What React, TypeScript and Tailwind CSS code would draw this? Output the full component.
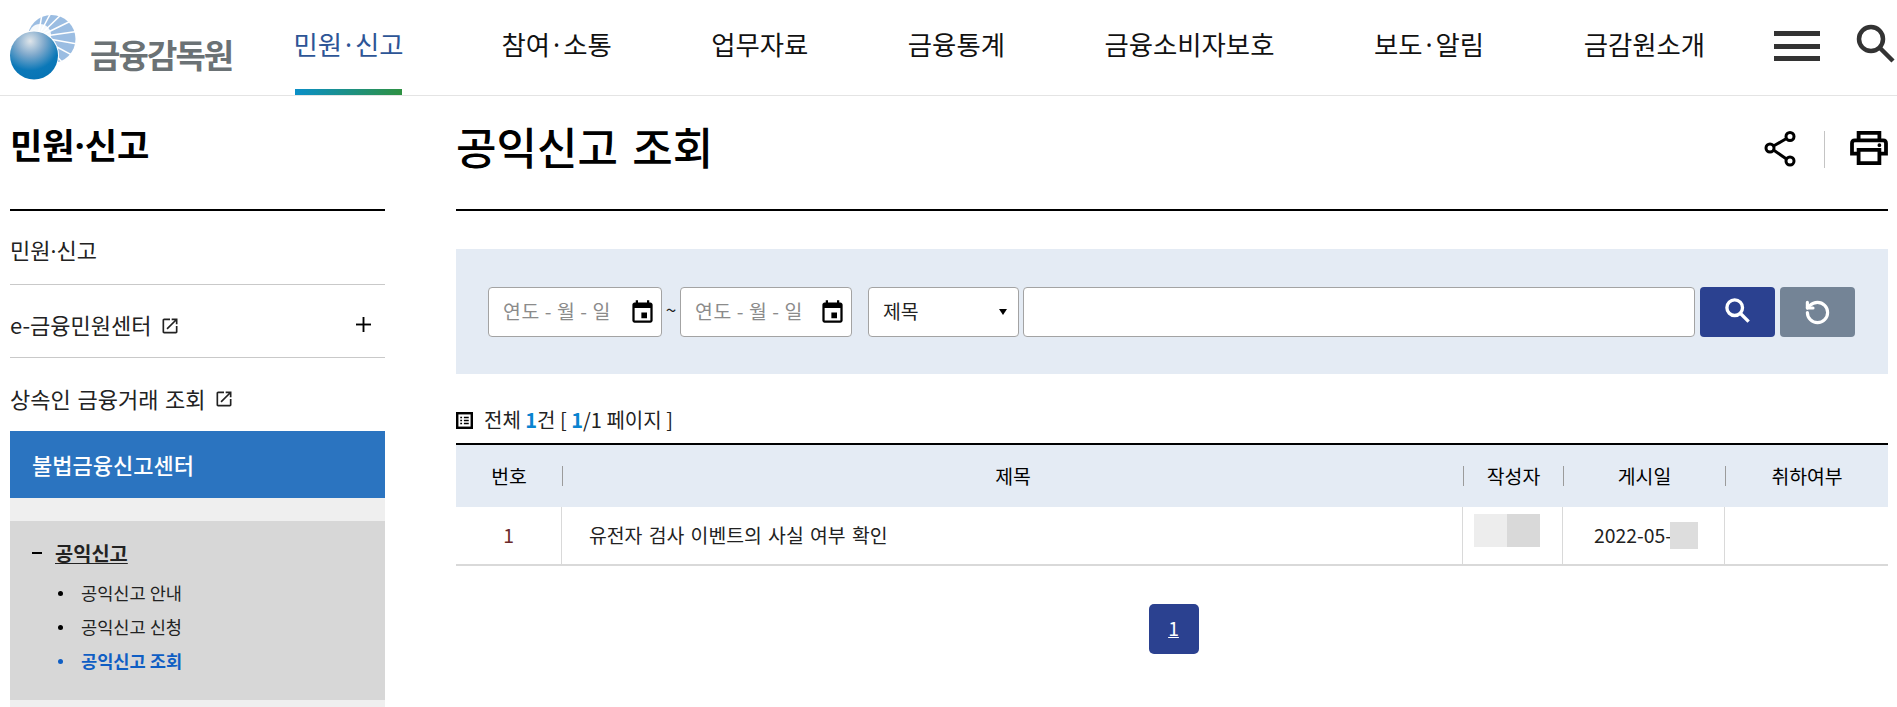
import React from 'react';
import { RotateCcw } from 'lucide-react';

function Dot() {
  return <span className="font-['Noto_Sans']">·</span>;
}

function NavDot() {
  return <span className="mx-[3px] font-['Noto_Sans']">·</span>;
}

const navItems = [
  <>참여<NavDot />소통</>,
  '업무자료',
  '금융통계',
  '금융소비자보호',
  <>보도<NavDot />알림</>,
  '금감원소개',
];

function Logo() {
  const rays = [-80, -62, -44, -26, -8, 10, 28, 46, 64, 82];
  return (
    <svg width="70" height="70" viewBox="0 0 70 70" className="shrink-0">
      <defs>
        <radialGradient id="ball" cx="0.42" cy="0.2" r="0.85">
          <stop offset="0" stopColor="#dfe5ea" />
          <stop offset="0.35" stopColor="#7fa9cc" />
          <stop offset="0.72" stopColor="#0b78b8" />
          <stop offset="1" stopColor="#0673b4" />
        </radialGradient>
      </defs>
      <circle cx="41.5" cy="26" r="24" fill="#9bbde2" />
      <g stroke="#fff" strokeWidth="1.5">
        {rays.map((r) => (
          <line key={r} x1="28" y1="24" x2={28 + 44 * Math.cos((r * Math.PI) / 180)} y2={24 + 44 * Math.sin((r * Math.PI) / 180)} />
        ))}
      </g>
      <circle cx="30" cy="22" r="11" fill="#fff" opacity="0.9" />
      <circle cx="24" cy="42.5" r="25" fill="#fff" />
      <circle cx="24" cy="42.5" r="24" fill="url(#ball)" />
    </svg>
  );
}

function CalendarIcon() {
  return (
    <svg width="27" height="27" viewBox="0 0 24 24" fill="#000" className="shrink-0">
      <path d="M16 12h-5v5h5v-5zM16 1v2H8V1H6v2H5c-1.11 0-1.99.9-1.99 2L3 19c0 1.1.89 2 2 2h14c1.1 0 2-.9 2-2V5c0-1.1-.9-2-2-2h-1V1h-2zm3 18H5V8h14v11z" />
    </svg>
  );
}

function ExternalIcon() {
  return (
    <svg width="20" height="20" viewBox="0 0 24 24" fill="#222" className="mt-[2px] shrink-0">
      <path d="M19 19H5V5h7V3H5c-1.11 0-2 .9-2 2v14c0 1.1.89 2 2 2h14c1.1 0 2-.9 2-2v-7h-2v7zM14 3v2h3.59l-9.83 9.83 1.41 1.41L19 6.41V10h2V3h-7z" />
    </svg>
  );
}

function DateBox({ width }: { width: string }) {
  return (
    <div className={`flex h-[50px] items-center justify-between rounded-[4px] border border-[#a3a3a3] bg-white pr-[5px] pl-[14px] ${width}`}>
      <span className="text-[19.36px] tracking-[0.6px] text-[#8b8b8b]">연도 - 월 - 일</span>
      <CalendarIcon />
    </div>
  );
}

export default function App() {
  return (
    <div className="h-[707px] overflow-hidden bg-white font-['Noto_Sans_CJK_KR','Noto_Sans',sans-serif] text-[#222]">
      {/* Header */}
      <header className="flex h-[96px] border-b border-[#e4e4e4]">
        <div className="ml-[10px] flex w-[285px] shrink-0 items-center gap-[10px]">
          <Logo />
          <span className="mt-[13px] text-[33px] leading-none font-bold tracking-[-1.9px] text-[#6b7275]">금융감독원</span>
        </div>
        <nav className="flex gap-[99.5px] text-[26.4px] text-[#111]">
          <a className="flex h-[95px] w-[107px] justify-center border-b-[6px] border-transparent pt-[24px] leading-[40px] whitespace-nowrap text-[#2d5596] [border-image:linear-gradient(to_right,#0a8fc9,#2f9141)_1]">
            <span>민원<NavDot />신고</span>
          </a>
          {navItems.map((item, i) => (
            <a key={i} className="pt-[24px] leading-[40px] whitespace-nowrap">
              {item}
            </a>
          ))}
        </nav>
        <div className="ml-auto flex items-start">
          <div className="mt-[31px] mr-[32px] flex h-[30px] w-[46px] flex-col justify-between">
            <span className="h-[5px] bg-[#333]" />
            <span className="h-[5px] bg-[#333]" />
            <span className="h-[5px] bg-[#333]" />
          </div>
          <svg width="44" height="44" viewBox="0 0 44 44" fill="none" stroke="#333" strokeWidth="4.5" className="mt-[24px] mr-[1px]">
            <circle cx="19" cy="15" r="12" />
            <line x1="28" y1="24" x2="41" y2="37" />
          </svg>
        </div>
      </header>

      <div className="flex">
        {/* Sidebar */}
        <aside className="ml-[10px] w-[375px] shrink-0">
          <h2 className="flex h-[115px] items-start border-b-2 border-black pt-[24px] text-[35.2px] leading-[48px] font-bold text-black">
            <span>민원<Dot />신고</span>
          </h2>
          <div className="flex h-[74px] items-center border-b border-[#c9c9c9] pt-[5px] text-[22px]">
            <span>민원<Dot />신고</span>
          </div>
          <div className="flex h-[73px] items-center justify-between border-b border-[#c9c9c9] pt-[7px] pr-[14px] text-[22px]">
            <span className="flex items-center gap-[8px]">
              e-금융민원센터 <ExternalIcon />
            </span>
            <svg width="15" height="15" viewBox="0 0 16 16" stroke="#000" strokeWidth="2">
              <line x1="8" y1="0" x2="8" y2="16" />
              <line x1="0" y1="8" x2="16" y2="8" />
            </svg>
          </div>
          <div className="flex h-[73px] items-center gap-[8px] pt-[7px] text-[22px] [word-spacing:0.08em]">
            상속인 금융거래 조회 <ExternalIcon />
          </div>
          <div className="flex h-[67px] items-center bg-[#2b74c0] pl-[22px] text-[22px] font-medium text-white">불법금융신고센터</div>
          <div className="bg-[#efefef] pt-[23px] pb-[20px]">
            <div className="h-[179px] bg-[#d7d7d7] pt-[17px] pl-[22px]">
              <div className="flex items-center gap-[13px] text-[19.8px] leading-[30px] font-bold">
                <span className="h-[2px] w-[10px] bg-black" />
                <span className="underline underline-offset-2">공익신고</span>
              </div>
              <ul className="mt-[8px] text-[17.6px] leading-[34px]">
                <li className="flex items-center gap-[18px] pl-[26px]">
                  <span className="size-[5px] rounded-full bg-black" />
                  공익신고 안내
                </li>
                <li className="flex items-center gap-[18px] pl-[26px]">
                  <span className="size-[5px] rounded-full bg-black" />
                  공익신고 신청
                </li>
                <li className="flex items-center gap-[18px] pl-[26px] font-bold text-[#0f5ec4]">
                  <span className="size-[5px] rounded-full bg-[#0f5ec4]" />
                  공익신고 조회
                </li>
              </ul>
            </div>
          </div>
        </aside>

        {/* Main */}
        <main className="ml-[71px] w-[1432px] shrink-0">
          <div className="flex h-[115px] items-start justify-between border-b-2 border-black">
            <h1 className="pt-[22px] text-[44px] leading-[56px] font-medium text-black [word-spacing:0.1em]">공익신고 조회</h1>
            <div className="mt-[35px] flex items-start">
              <svg width="34" height="36" viewBox="0 0 34 36" fill="none" stroke="#000" strokeWidth="3">
                <circle cx="6" cy="17" r="4" />
                <circle cx="26" cy="5.5" r="4" />
                <circle cx="26" cy="30" r="4" />
                <line x1="9.5" y1="15" x2="22.5" y2="7.5" />
                <line x1="9.5" y1="19" x2="22.5" y2="28" />
              </svg>
              <span className="mr-[25px] ml-[26px] h-[37px] w-px bg-[#c4c4c4]" />
              <svg width="38" height="34" viewBox="0 0 40 36" fill="none" stroke="#000" strokeWidth="4">
                <path d="M9 11V2h22v9" />
                <path d="M9 24H2V13q0-3 3-3h30q3 0 3 3v11h-7" />
                <path d="M9 20h22v14H9z" />
                <circle cx="31" cy="15" r="1" fill="#000" strokeWidth="2" />
              </svg>
            </div>
          </div>

          {/* Search panel */}
          <div className="mt-[38px] flex h-[125px] items-start bg-[#e4ebf4] pt-[38px] pl-[32px]">
            <DateBox width="w-[174px]" />
            <span className="mt-[10px] w-[18px] text-center text-[19px] leading-[24px]">~</span>
            <DateBox width="w-[172px]" />
            <div className="ml-[16px] flex h-[50px] w-[151px] items-center justify-between rounded-[4px] border border-[#a3a3a3] bg-white pr-[11px] pl-[14px] text-[19.36px]">
              제목
              <span className="h-0 w-0 border-x-[4px] border-t-[6px] border-x-transparent border-t-black" />
            </div>
            <div className="ml-[4px] h-[50px] w-[672px] rounded-[4px] border border-[#a3a3a3] bg-white" />
            <div className="ml-[5px] flex h-[50px] w-[75px] items-center justify-center rounded-[4px] bg-[#2b4190] pb-[3px]">
              <svg width="29" height="29" viewBox="0 0 26 26" fill="none" stroke="#fff" strokeWidth="3">
                <circle cx="10.5" cy="10.5" r="7" />
                <line x1="15.5" y1="15.5" x2="23" y2="23" />
              </svg>
            </div>
            <div className="ml-[5px] flex h-[50px] w-[75px] items-center justify-center rounded-[4px] bg-[#748496]">
              <RotateCcw size={27} color="#fff" strokeWidth={2.8} />
            </div>
          </div>

          {/* Summary */}
          <div className="mt-[28px] mb-[5px] flex h-[36px] items-center gap-[11px] text-[20px]">
            <svg width="17" height="17" viewBox="0 0 14 14" fill="none" className="shrink-0">
              <rect x="1" y="1" width="12" height="12" stroke="#000" strokeWidth="2" />
              <path d="M3.5 4.5h1.5M6.5 4.5h4M3.5 7h1.5M6.5 7h4M3.5 9.5h1.5M6.5 9.5h4" stroke="#000" strokeWidth="1.2" />
            </svg>
            <span>
              전체 <b className="font-bold text-[#0a84d0]">1</b>건 [ <b className="font-bold text-[#0a84d0]">1</b>/1 페이지 ]
            </span>
          </div>

          {/* Table */}
          <div className="border-t-2 border-black">
            <div className="grid h-[62px] grid-cols-[107px_901px_100px_162px_162px] items-center bg-[#e4ebf4] text-center text-[19.36px] text-black">
              <div className="border-r border-[#9b9b9b] leading-[20px]">번호</div>
              <div className="border-r border-[#9b9b9b] leading-[20px]">제목</div>
              <div className="border-r border-[#9b9b9b] leading-[20px]">작성자</div>
              <div className="border-r border-[#9b9b9b] leading-[20px]">게시일</div>
              <div className="leading-[20px]">취하여부</div>
            </div>
            <div className="grid h-[59px] grid-cols-[106px_901px_100px_162px_163px] border-b-2 border-[#d9d9d9] text-[19.36px]">
              <div className="flex items-center justify-center border-r border-[#d9d9d9] text-[#6b2a2a]">1</div>
              <div className="flex items-center border-r border-[#d9d9d9] pl-[27px] [word-spacing:0.1em]">유전자 검사 이벤트의 사실 여부 확인</div>
              <div className="flex items-start border-r border-[#d9d9d9] pt-[7px] pl-[11px]">
                <span className="h-[33px] w-[33px] bg-[#ededed]" />
                <span className="h-[33px] w-[33px] bg-[#d9d9d9]" />
              </div>
              <div className="flex items-center border-r border-[#d9d9d9] pl-[31px]">
                <span className="shrink-0 whitespace-nowrap">2022-05-</span>
                <span className="-ml-[2px] h-[27px] w-[28px] bg-[#dddddd]" />
              </div>
              <div />
            </div>
          </div>

          {/* Pagination */}
          <div className="mt-[38px] flex justify-center pl-[3px]">
            <a className="flex h-[50px] w-[50px] items-center justify-center rounded-[5px] bg-[#2b4190] text-[19.36px] text-white underline">1</a>
          </div>
        </main>
      </div>
    </div>
  );
}
